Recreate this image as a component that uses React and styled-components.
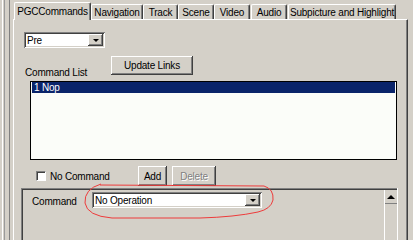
import React from "react"
import styled, { createGlobalStyle } from "styled-components"

const GlobalStyle = createGlobalStyle`
  html, body, #root {
    margin: 0;
    padding: 0;
    min-height: 100%;
    background: #d4d0c8;
  }
  * {
    box-sizing: border-box;
  }
`

const raised = `
  box-shadow: inset -1px -1px #404040, inset 1px 1px #ffffff, inset -2px -2px #808080, inset 2px 2px #d4d0c8;
`

const sunken = `
  box-shadow: inset 1px 1px #808080, inset -1px -1px #ffffff, inset 2px 2px #404040, inset -2px -2px #d4d0c8;
`

const Window = styled.div`
  position: relative;
  width: 413px;
  height: max(222px, 100vh);
  overflow: hidden;
  display: flex;
  background: #d4d0c8;
  font-family: "Liberation Sans", Arial, sans-serif;
  font-size: 10px;
  letter-spacing: -0.2px;
  color: #000;
`

const Splitter = styled.div`
  width: 13px;
  flex-shrink: 0;
  background: linear-gradient(to right,
    #d4d0c8 0 2px, #ffffff 2px 3px, #d4d0c8 3px 4px, #9a9a9a 4px 5px,
    #d4d0c8 5px 9px, #808080 9px 10px, #d4d0c8 10px 13px);
`

const TabControl = styled.div`
  width: 395px;
  display: flex;
  flex-direction: column;
`

const TabStrip = styled.div`
  height: 19px;
  display: flex;
  align-items: flex-end;
  position: relative;
  z-index: 1;
`

const Tab = styled.div`
  width: ${({ w }) => w}px;
  margin-left: ${({ ml }) => ml || 0}px;
  height: ${({ active }) => (active ? 18 : 15)}px;
  margin-bottom: ${({ active }) => (active ? -1 : 0)}px;
  display: flex;
  align-items: center;
  justify-content: center;
  padding-top: ${({ active }) => (active ? 0 : 1)}px;
  background: #d4d0c8;
  border-top: 1px solid #ffffff;
  border-left: 1px solid #ffffff;
  border-right: 1px solid #404040;
  box-shadow: inset -1px 0 #808080;
  border-radius: 2px 2px 0 0;
  white-space: nowrap;
  overflow: hidden;
`

const Panel = styled.div`
  flex: 1;
  display: flex;
  flex-direction: column;
  border-top: 1px solid #ffffff;
  border-left: 1px solid #ffffff;
  border-right: 1px solid #404040;
  box-shadow: inset -1px 0 #808080;
  padding-top: 12px;
`

const Combo = styled.div`
  width: ${({ w }) => w}px;
  height: 16px;
  margin-left: ${({ ml }) => ml || 0}px;
  background: #ffffff;
  ${sunken}
  display: flex;
  align-items: center;
  padding: 2px;
`

const ComboText = styled.div`
  flex: 1;
  padding-left: 1px;
  overflow: hidden;
  white-space: nowrap;
`

const ArrowBtn = styled.div`
  width: 15px;
  height: 12px;
  background: #d4d0c8;
  ${raised}
  display: flex;
  align-items: center;
  justify-content: center;
`

const ArrowDown = styled.div`
  width: 0;
  height: 0;
  border-left: 3px solid transparent;
  border-right: 3px solid transparent;
  border-top: 3px solid #000;
`

const ArrowUp = styled.div`
  width: 0;
  height: 0;
  border-left: 4px solid transparent;
  border-right: 4px solid transparent;
  border-bottom: 4px solid #000;
`

const Row = styled.div`
  display: flex;
  align-items: ${({ align }) => align || "center"};
  margin-top: ${({ mt }) => mt || 0}px;
  margin-left: ${({ ml }) => ml || 0}px;
  height: ${({ h }) => h}px;
`

const Label = styled.span`
  width: ${({ w }) => (w ? `${w}px` : "auto")};
  padding-bottom: ${({ pb }) => pb || 0}px;
  white-space: nowrap;
`

const Button = styled.div`
  width: ${({ w }) => w}px;
  height: ${({ h }) => h || 20}px;
  margin-left: ${({ ml }) => ml || 0}px;
  display: flex;
  align-items: center;
  justify-content: center;
  background: #d4d0c8;
  color: ${({ disabled }) => (disabled ? "#808080" : "#000")};
  text-shadow: ${({ disabled }) => (disabled ? "1px 1px #ffffff" : "none")};
  ${raised}
  align-self: flex-start;
`

const ListBox = styled.div`
  margin-left: 16px;
  width: 367px;
  height: 79px;
  background: #fbfdf9;
  border: 1px solid #000;
  padding: 0 1px;
`

const ListItem = styled.div`
  height: 11px;
  line-height: 11px;
  padding-left: 2px;
  background: ${({ selected }) => (selected ? "#0a246a" : "transparent")};
  color: ${({ selected }) => (selected ? "#ffffff" : "#000")};
`

const Check = styled.div`
  width: 10px;
  height: 10px;
  background: #ffffff;
  border-top: 1px solid #808080;
  border-left: 1px solid #808080;
  border-right: 1px solid #ffffff;
  border-bottom: 1px solid #ffffff;
  box-shadow: inset 1px 1px #404040;
  margin-right: 4px;
`

const Group = styled.div`
  flex: 1;
  margin-top: 2px;
  margin-left: 7px;
  width: 377px;
  display: flex;
  box-shadow: inset 1px 1px #808080, inset 2px 2px #404040;
  border-right: 1px solid #ffffff;
  padding: 4px 0 0 11px;
`

const GroupBody = styled.div`
  flex: 1;
  display: flex;
  align-items: flex-start;
`

const GroupLabel = styled.span`
  width: 60px;
  padding-top: 4px;
  white-space: nowrap;
`

const ScrollBar = styled.div`
  width: 13px;
  border-left: 1px solid #ffffff;
  margin-top: -2px;
  display: flex;
  flex-direction: column;
`

const ScrollBtn = styled.div`
  height: 14px;
  display: flex;
  align-items: center;
  justify-content: center;
  border-bottom: 1px solid #808080;
`

const RightGap = styled.div`
  flex: 1;
`

const Annotation = styled.svg`
  position: absolute;
  left: 0;
  top: 0;
  pointer-events: none;
`

const tabs = [
  { label: "PGCCommands", w: 77, ml: 1, active: true },
  { label: "Navigation", w: 52 },
  { label: "Track", w: 35 },
  { label: "Scene", w: 36 },
  { label: "Video", w: 36 },
  { label: "Audio", w: 36, ml: 1 },
  { label: "Subpicture and Highlight", w: 108, ml: 1 },
]

export default function App() {
  return (
    <>
      <GlobalStyle />
      <Window>
        <Splitter />
        <TabControl>
          <TabStrip>
            {tabs.map((t) => (
              <Tab key={t.label} w={t.w} ml={t.ml} active={t.active}>
                {t.label}
              </Tab>
            ))}
          </TabStrip>
          <Panel>
            <Combo w={81} ml={10}>
              <ComboText>Pre</ComboText>
              <ArrowBtn>
                <ArrowDown />
              </ArrowBtn>
            </Combo>
            <Row mt={8} ml={11} h={25} align="flex-end">
              <Label w={86} pb={3}>Command List</Label>
              <Button w={82} h={19}>Update Links</Button>
            </Row>
            <ListBox>
              <ListItem selected>1 Nop</ListItem>
            </ListBox>
            <Row mt={6} ml={22} h={20}>
              <Check />
              <Label w={88}>No Command</Label>
              <Button w={29}>Add</Button>
              <Button w={44} ml={5} disabled>Delete</Button>
            </Row>
            <Group>
              <GroupBody>
                <GroupLabel>Command</GroupLabel>
                <Combo w={170}>
                  <ComboText>No Operation</ComboText>
                  <ArrowBtn>
                    <ArrowDown />
                  </ArrowBtn>
                </Combo>
              </GroupBody>
              <ScrollBar>
                <ScrollBtn>
                  <ArrowUp />
                </ScrollBtn>
              </ScrollBar>
            </Group>
          </Panel>
        </TabControl>
        <RightGap />
        <Annotation width="413" height="222" viewBox="0 0 413 222">
          <path
            d="M100 185 L264 186 Q274 189 273 200 Q271 209 258 212 Q235 217 200 218 L112 218 Q87 216 85 203 Q84 189 101 184"
            fill="none"
            stroke="#ee3b3b"
            strokeWidth="1"
          />
        </Annotation>
      </Window>
    </>
  )
}
